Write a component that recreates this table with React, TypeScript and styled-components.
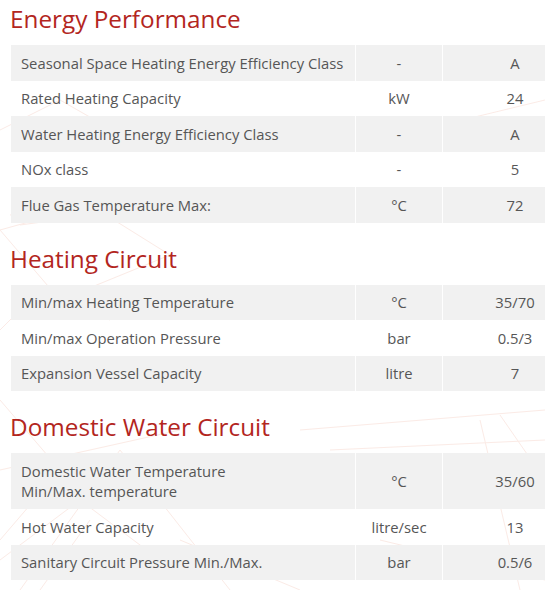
import React from "react";
import styled, { createGlobalStyle } from "styled-components";

const Global = createGlobalStyle`
  html, body { margin: 0; padding: 0; background: #fff; }
  body { font-family: "Open Sans", "Liberation Sans", sans-serif; overflow: hidden; }
`;

const Page = styled.div`
  position: relative;
  width: 545px;
  height: 590px;
  overflow: hidden;
  padding-top: 4px;
  box-sizing: border-box;
`;

const Backdrop = styled.svg`
  position: absolute;
  inset: 0;
  width: 545px;
  height: 590px;
  z-index: 0;
  pointer-events: none;
`;

const Content = styled.div`
  position: relative;
  z-index: 1;
`;

const Section = styled.section<{ $first?: boolean }>`
  margin-top: ${(p) => (p.$first ? "0" : "21px")};
`;

const Heading = styled.h2`
  margin: 0 0 11px;
  padding-left: 10px;
  font-family: "Open Sans", "Liberation Sans", sans-serif;
  font-weight: 400;
  font-size: 24.3px;
  line-height: 30px;
  color: #b3261e;
`;

const Table = styled.div`
  margin-left: 11px;
  width: 576px;
  display: grid;
  grid-template-columns: 344px 87px 145px;
`;

const Cell = styled.div<{ $shade: boolean; $align: "left" | "center" }>`
  background: ${(p) => (p.$shade ? "#f1f1f1" : "transparent")};
  border-left: ${(p) => (p.$align === "left" ? "none" : "1px solid rgba(255,255,255,0.9)")};
  padding: ${(p) => (p.$align === "left" ? "7.5px 10px" : "7.5px 0")};
  text-align: ${(p) => p.$align};
  display: flex;
  align-items: center;
  justify-content: ${(p) => (p.$align === "left" ? "flex-start" : "center")};
  font-size: 14.8px;
  line-height: 20.5px;
  color: #565656;
`;

type Row = [React.ReactNode, string, string];

const sections: { title: string; rows: Row[] }[] = [
  {
    title: "Energy Performance",
    rows: [
      ["Seasonal Space Heating Energy Efficiency Class", "-", "A"],
      ["Rated Heating Capacity", "kW", "24"],
      ["Water Heating Energy Efficiency Class", "-", "A"],
      ["NOx class", "-", "5"],
      ["Flue Gas Temperature Max:", "°C", "72"],
    ],
  },
  {
    title: "Heating Circuit",
    rows: [
      ["Min/max Heating Temperature", "°C", "35/70"],
      ["Min/max Operation Pressure", "bar", "0.5/3"],
      ["Expansion Vessel Capacity", "litre", "7"],
    ],
  },
  {
    title: "Domestic Water Circuit",
    rows: [
      [
        <>
          Domestic Water Temperature
          <br />
          Min/Max. temperature
        </>,
        "°C",
        "35/60",
      ],
      ["Hot Water Capacity", "litre/sec", "13"],
      ["Sanitary Circuit Pressure Min./Max.", "bar", "0.5/6"],
    ],
  },
];

const line = "#f4c6b8";

export default function App() {
  return (
    <>
      <Global />
      <Page>
        <Backdrop viewBox="0 0 545 590">
          <g stroke={line} strokeWidth="1" fill="none" opacity="0.35">
            <path d="M0 230 L90 205 L170 255 L60 300 Z" />
            <path d="M10 215 L120 200 M20 225 L130 210" />
            <path d="M0 330 L40 290 L110 320" />
            <path d="M0 400 L60 470 L0 540" />
            <path d="M20 590 L120 450 L230 590" />
            <path d="M0 470 L180 430" />
            <path d="M0 560 L80 500 L160 560" />
            <path d="M40 590 L90 520" />
            <path d="M300 430 L545 410" />
            <path d="M330 450 L545 440" />
            <path d="M480 420 L520 590" />
            <path d="M500 415 L545 480" />
            <path d="M380 540 L545 580" />
            <path d="M430 500 Q470 470 520 500" />
            <path d="M180 540 L300 590" />
            <path d="M0 130 L60 100 L130 140" />
            <path d="M380 140 L545 100" />
          </g>
        </Backdrop>
        <Content>
          {sections.map((s, si) => (
            <Section key={s.title} $first={si === 0}>
              <Heading>{s.title}</Heading>
              <Table>
                {s.rows.map((r, ri) => {
                  const shade = ri % 2 === 0;
                  return (
                    <React.Fragment key={ri}>
                      <Cell $shade={shade} $align="left">{r[0]}</Cell>
                      <Cell $shade={shade} $align="center">{r[1]}</Cell>
                      <Cell $shade={shade} $align="center">{r[2]}</Cell>
                    </React.Fragment>
                  );
                })}
              </Table>
            </Section>
          ))}
        </Content>
      </Page>
    </>
  );
}
